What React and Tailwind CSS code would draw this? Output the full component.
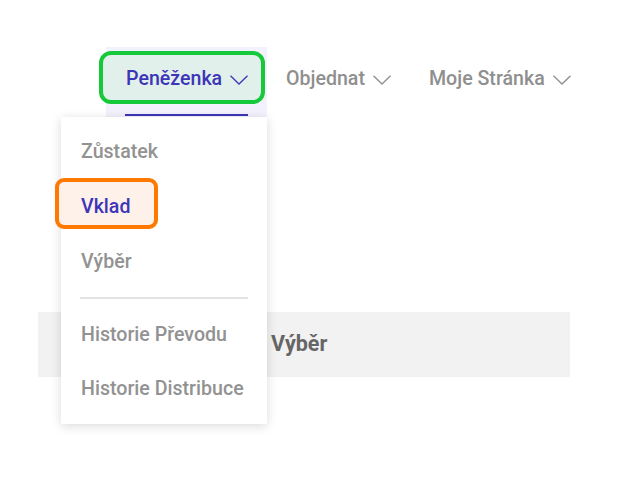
import React from "react";

function Chevron({ className }) {
  return (
    <svg className={className} width="18" height="10" viewBox="0 0 18 10" fill="none">
      <path d="M0.5 0.8 L9 9 L17.5 0.8" stroke="currentColor" strokeWidth="1.3" />
    </svg>
  );
}

export default function App() {
  return (
    <div className="relative w-[644px] h-[496px] bg-white overflow-hidden font-['Roboto','Liberation_Sans',sans-serif]">
      <nav className="flex items-start pt-[47px] pl-[106px]">
        <div className="relative flex items-center h-[71px] w-[161px] pl-[20px] pb-[8px] bg-[#f3f2fc]">
          <div className="absolute left-[-7px] top-[4px] w-[166px] h-[53px] rounded-[12px] border-[4px] border-[#16c93a] bg-[#e1f0ea]" />
          <span className="relative text-[19.6px] font-medium text-[#3d35b8]">Peněženka</span>
          <Chevron className="relative ml-[8px] mt-[2px] text-[#3d35b8]" />
          <div className="absolute left-[19px] top-[67px] w-[123px] h-[2px] bg-[#3d35b8]" />
        </div>
        <div className="flex items-center h-[63px] px-[19px] text-[#8f8f8f]">
          <span className="text-[19.6px] font-medium">Objednat</span>
          <Chevron className="ml-[8px] mt-[2px]" />
        </div>
        <div className="flex items-center h-[63px] px-[19px] text-[#8f8f8f]">
          <span className="text-[19.6px] font-medium">Moje Stránka</span>
          <Chevron className="ml-[8px] mt-[2px]" />
        </div>
      </nav>

      <div className="mx-[38px] w-[532px] mt-[194px] h-[65px] bg-[#f2f2f2] flex items-center pl-[233px]">
        <span className="text-[21.5px] font-bold text-[#666666]">Výběr</span>
      </div>

      <div className="absolute left-[61px] top-[117px] w-[206px] h-[307px] bg-white shadow-[0_2px_10px_rgba(0,0,0,0.15)] pt-[8px] pb-[7px] flex flex-col">
        <div className="h-[54px] flex items-center pl-[20px] text-[19.6px] font-medium text-[#929292]">Zůstatek</div>
        <div className="relative h-[55px] flex items-center pl-[20px]">
          <div className="absolute left-[-6px] top-[-1px] w-[103px] h-[51px] rounded-[9px] border-[4px] border-[#ff7800] bg-[#fdf1ea]" />
          <span className="relative text-[19.6px] font-medium text-[#3d35b8]">Vklad</span>
        </div>
        <div className="h-[55px] flex items-center pl-[20px] text-[19.6px] font-medium text-[#929292]">Výběr</div>
        <div className="mx-[19px] mt-[8px] mb-[9px] h-[2px] bg-[#e3e3e3]" />
        <div className="h-[54px] flex items-center pl-[20px] text-[19.6px] font-medium text-[#929292]">Historie Převodu</div>
        <div className="h-[54px] flex items-center pl-[20px] text-[19.6px] font-medium text-[#929292]">Historie Distribuce</div>
      </div>
    </div>
  );
}
